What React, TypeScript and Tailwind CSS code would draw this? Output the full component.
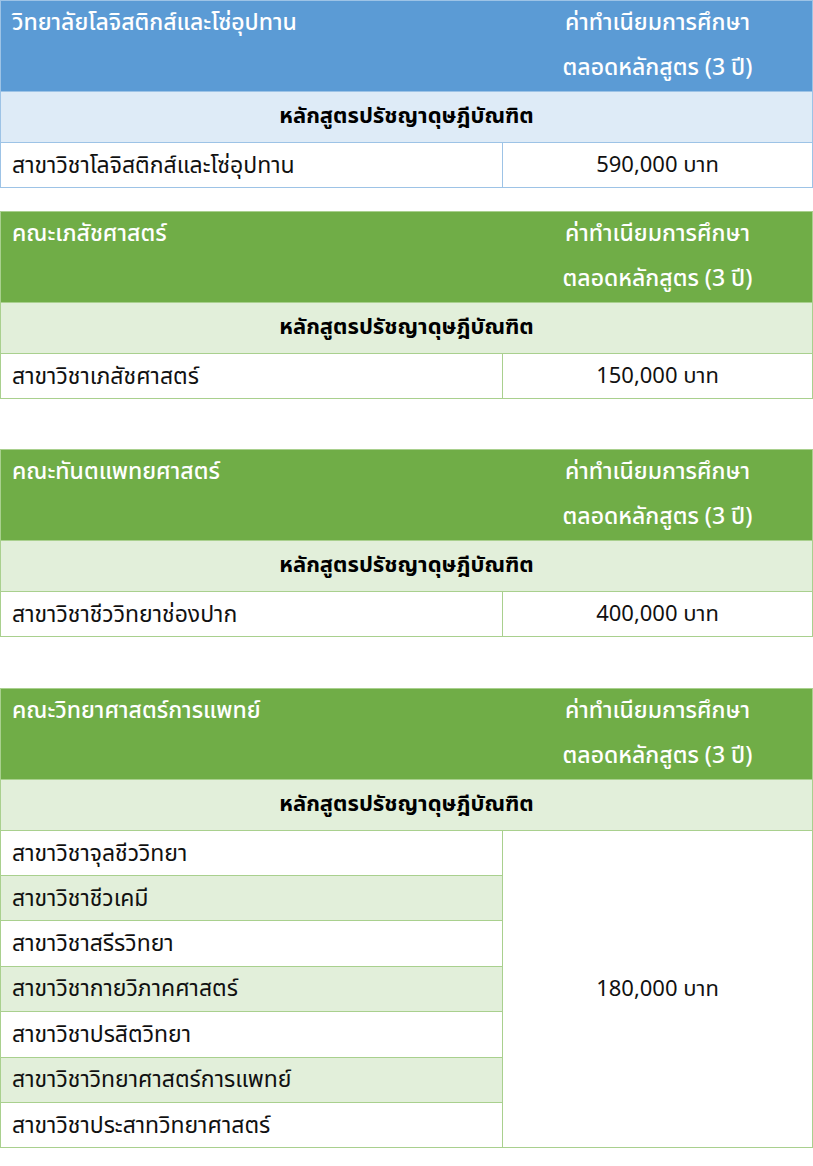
import React from "react";

type Section = {
  title: string;
  theme: "blue" | "green";
  majors: string[];
  fee: string;
};

const sections: Section[] = [
  {
    title: "วิทยาลัยโลจิสติกส์และโซ่อุปทาน",
    theme: "blue",
    majors: ["สาขาวิชาโลจิสติกส์และโซ่อุปทาน"],
    fee: "590,000 บาท",
  },
  {
    title: "คณะเภสัชศาสตร์",
    theme: "green",
    majors: ["สาขาวิชาเภสัชศาสตร์"],
    fee: "150,000 บาท",
  },
  {
    title: "คณะทันตแพทยศาสตร์",
    theme: "green",
    majors: ["สาขาวิชาชีววิทยาช่องปาก"],
    fee: "400,000 บาท",
  },
  {
    title: "คณะวิทยาศาสตร์การแพทย์",
    theme: "green",
    majors: [
      "สาขาวิชาจุลชีววิทยา",
      "สาขาวิชาชีวเคมี",
      "สาขาวิชาสรีรวิทยา",
      "สาขาวิชากายวิภาคศาสตร์",
      "สาขาวิชาปรสิตวิทยา",
      "สาขาวิชาวิทยาศาสตร์การแพทย์",
      "สาขาวิชาประสาทวิทยาศาสตร์",
    ],
    fee: "180,000 บาท",
  },
];

function FeeTable({ s }: { s: Section }) {
  const blue = s.theme === "blue";
  const border = blue ? "border-[#9dc3e6]" : "border-[#a9d08e]";
  const head = blue ? "bg-[#5b9bd5]" : "bg-[#70ad47]";
  const sub = blue ? "bg-[#deebf7]" : "bg-[#e2efda]";

  return (
    <div className={`border ${border} text-[22px] leading-[30px]`}>
      <div className={`grid grid-cols-[502px_1fr] h-[90px] ${head} text-white font-medium text-[23px]`}>
        <div className="pl-[11px] pt-[7px]">{s.title}</div>
        <div className="flex flex-col items-center">
          <div className="h-[45px] pt-[7px]">ค่าทำเนียมการศึกษา</div>
          <div className="h-[45px] pt-[7px]">ตลอดหลักสูตร (3 ปี)</div>
        </div>
      </div>
      <div className={`h-[51px] border-t ${border} ${sub} flex items-center justify-center font-bold text-black`}>
        หลักสูตรปรัชญาดุษฎีบัณฑิต
      </div>
      <div className={`grid grid-cols-[502px_1fr] border-t ${border}`}>
        <div className={`border-r ${border} text-[23px]`}>
          {s.majors.map((m, i) => (
            <div
              key={m}
              className={`flex items-center pl-[11px] pt-[1px] ${
                i > 0 ? `h-[45.4px] border-t ${border}` : "h-[44px]"
              } ${s.majors.length > 1 && i % 2 === 1 ? sub : "bg-white"}`}
            >
              {m}
            </div>
          ))}
        </div>
        <div className="flex items-center justify-center pt-[1px]">{s.fee}</div>
      </div>
    </div>
  );
}

export default function App() {
  return (
    <div
      className="w-[813px] bg-white text-[#111]"
      style={{ fontFamily: '"Noto Sans Thai", "Noto Sans", "DejaVu Sans", sans-serif' }}
    >
      <FeeTable s={sections[0]} />
      <div className="h-[23px]" />
      <FeeTable s={sections[1]} />
      <div className="h-[50px]" />
      <FeeTable s={sections[2]} />
      <div className="h-[51px]" />
      <FeeTable s={sections[3]} />
    </div>
  );
}
